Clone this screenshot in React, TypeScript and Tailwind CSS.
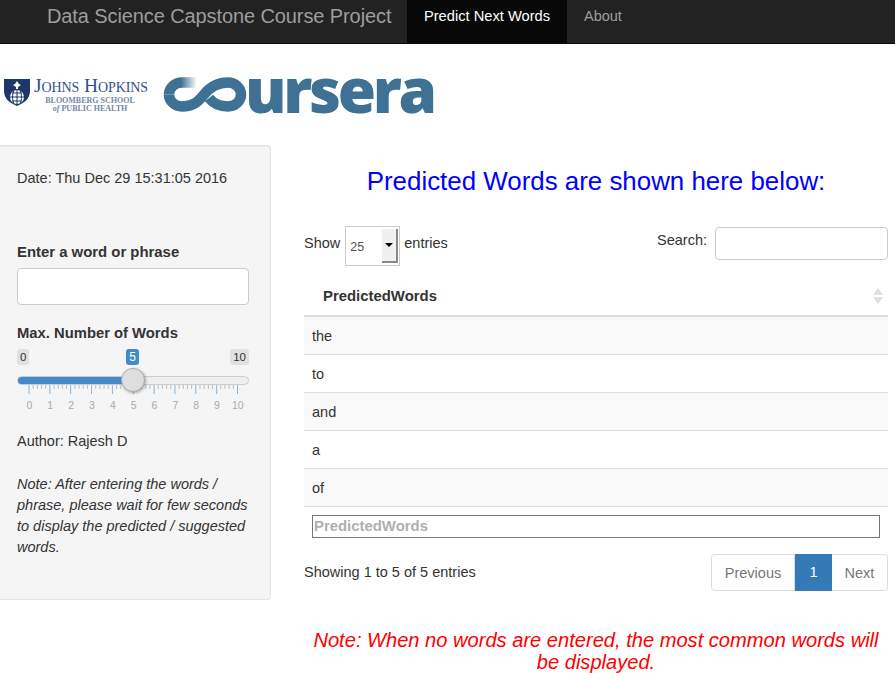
const words = ["the", "to", "and", "a", "of"];
const scale = [0, 1, 2, 3, 4, 5, 6, 7, 8, 9, 10];

const Navbar = () => (
  <nav className="flex h-[44px] bg-[#222222] border-b border-[#080808]">
    <div className="pl-[47px] w-[407px] pt-[3px] text-[20px] leading-[26px] tracking-[-0.1px] text-[#9d9d9d]">
      Data Science Capstone Course Project
    </div>
    <div className="w-[160px] h-[43px] bg-[#080808] text-white text-[14.700px] leading-[20px] pt-[6px] text-center">
      Predict Next Words
    </div>
    <div className="px-[17px] text-[#9d9d9d] text-[14.500px] leading-[20px] pt-[6px]">About</div>
  </nav>
);

const Logos = () => (
  <div className="h-[101px] flex items-start pt-[33px] pl-[4px]">
    <svg width="26" height="28" viewBox="0 0 26 28" className="mt-[1px] shrink-0">
      <path d="M0 1h26v12c0 8-6 12-13 15C6 25 0 21 0 13z" fill="#1d3769" />
      <path d="M13 3l2 3 2 1-3 2v2h-2V9L9 7l2-1z" fill="#fff" />
      <circle cx="13" cy="19" r="7" fill="#fff" />
      <path d="M6 19h14M13 12v14M8 15h10M8 23h10M10 12.500c-2 4-2 9 0 13M16 12.500c2 4 2 9 0 13" stroke="#1d3769" strokeWidth="1" fill="none" />
    </svg>
    <div className="w-[112px] ml-[4px] text-center font-['Liberation_Serif',serif] text-[#34508c]">
      <div className="text-[19.500px] leading-[18px] tracking-[-0.1px] whitespace-nowrap [font-variant-caps:small-caps]">Johns Hopkins</div>
      <div className="text-[8px] leading-[8px] mt-[2px] font-bold text-[#7486ab] whitespace-nowrap">BLOOMBERG SCHOOL</div>
      <div className="text-[8px] leading-[8px] font-bold text-[#7486ab] whitespace-nowrap">
        <i>of</i> PUBLIC HEALTH
      </div>
    </div>
    <svg width="86" height="35" viewBox="0 0 86 35" className="ml-[17px] shrink-0">
      <defs>
        <linearGradient id="cFade" gradientUnits="userSpaceOnUse" x1="18" y1="0" x2="34" y2="0">
          <stop offset="0" stopColor="#3f7194" />
          <stop offset="1" stopColor="#ffffff" />
        </linearGradient>
      </defs>
      <path d="M34 5.500H19A13 12 0 0 0 6 17.500" stroke="url(#cFade)" strokeWidth="10.500" fill="none" />
      <path d="M6 17.500A13 12 0 0 0 19 29.500C30 29.500 35 25 41 17.500S54 5.500 65 5.500A13 12 0 0 1 65 29.500C57 29.500 50 26 46 21" stroke="#3f7194" strokeWidth="10.500" fill="none" />
    </svg>
    <div className="h-[35px] font-['Open_Sans',sans-serif] font-extrabold text-[62px] leading-[24px] tracking-[-3.300px] text-[#3f7194] ml-[-4px] whitespace-nowrap">
      ursera
    </div>
  </div>
);

const SliderInput = () => (
  <div className="relative h-[67px] mt-[6px]">
    <div className="flex justify-between text-[11.500px] leading-[16px] text-[#333333]">
      <span className="bg-[#e1e1e1] rounded-[3px] px-[3px]">0</span>
      <span className="bg-[#e1e1e1] rounded-[3px] px-[3px]">10</span>
    </div>
    <span className="absolute left-[109px] top-0 w-[13px] text-center bg-[#428bca] rounded-[3px] text-white text-[12px] leading-[16px]">5</span>
    <div className="flex mt-[11px] h-[9px] rounded-full border border-[#cccccc] bg-[#eeeeee] overflow-hidden">
      <div className="w-[116px] bg-[#428bca]" />
    </div>
    <div className="absolute left-[104px] top-[19px] w-[24px] h-[24px] rounded-full bg-[#dedede] border border-[#ababab] shadow-[1px_1px_3px_rgba(0,0,0,0.3)]" />
    <svg width="232" height="10" viewBox="0 0 232 10" className="block">
      {scale.map((n) => (
        <line key={n} x1={12 + n * 20.85} x2={12 + n * 20.85} y1="0" y2="9" stroke="#428bca" strokeOpacity="0.6" />
      ))}
      {scale.slice(0, 10).flatMap((n) =>
        [1, 2, 3, 4].map((m) => (
          <line key={`${n}-${m}`} x1={12 + n * 20.85 + m * 4.17} x2={12 + n * 20.85 + m * 4.17} y1="0" y2="4" stroke="#bbbbbb" />
        ))
      )}
    </svg>
    <div className="flex text-[10.500px] leading-[12px] text-[#aaaaaa] ml-[2px] mt-[4px]">
      {scale.map((n) => (
        <span key={n} className="w-[20.850px] text-center">{n}</span>
      ))}
    </div>
  </div>
);

const Sidebar = () => (
  <aside className="w-[271px] h-[455px] shrink-0 bg-[#f5f5f5] border border-l-0 border-[#e3e3e3] rounded-r-[4px] pl-[17px] pr-[21px] pt-[22px] text-[14.500px] leading-[20px] text-[#333333] shadow-[inset_0_1px_1px_rgba(0,0,0,0.05)]">
    <p>Date: Thu Dec 29 15:31:05 2016</p>
    <label className="block font-bold text-[14.900px] mt-[54px]">Enter a word or phrase</label>
    <input className="block w-[232px] h-[37px] mt-[6px] bg-white border border-[#cccccc] rounded-[4px]" />
    <label className="block font-bold text-[14.800px] mt-[18px]">Max. Number of Words</label>
    <SliderInput />
    <p className="mt-[15px]">Author: Rajesh D</p>
    <p className="italic mt-[23px] leading-[21px]">
      Note: After entering the words / phrase, please wait for few seconds to display the predicted / suggested words.
    </p>
  </aside>
);

const Controls = () => (
  <div className="flex justify-between h-[51px]">
    <div className="flex items-start">
      <span className="mt-[7px]">Show</span>
      <div className="w-[55px] h-[40px] ml-[5px] bg-white border border-[#cccccc] flex pt-[2px] pl-[4px] pr-[1px]">
        <span className="w-[32px] text-[12.500px] leading-[16px] pt-[10px] text-[#555555]">25</span>
        <div className="w-[16px] h-[34px] bg-[#f0f0f0] border-r-2 border-b-2 border-[#8a8a8a] flex items-center justify-center">
          <span className="w-0 h-0 border-x-[4px] border-x-transparent border-t-[4px] border-t-black" />
        </div>
      </div>
      <span className="mt-[7px] ml-[4px]">entries</span>
    </div>
    <div className="flex items-start">
      <span className="mt-[4px] mr-[8px]">Search:</span>
      <input className="w-[173px] h-[33px] mt-[1px] bg-white border border-[#cccccc] rounded-[4px]" />
    </div>
  </div>
);

const WordsTable = () => (
  <div>
    <div className="h-[40px] flex items-center justify-between border-b-2 border-[#dddddd] pl-[19px] pr-[5px] font-bold text-[14.900px]">
      <span>PredictedWords</span>
      <svg width="10" height="16" viewBox="0 0 10 16">
        <path d="M5 0l5 7H0z M5 16l5-7H0z" fill="#e0e0e0" />
      </svg>
    </div>
    {words.map((w, i) => (
      <div key={w} className={`h-[38px] flex items-center pl-[8px] border-b border-[#dddddd] ${i % 2 === 0 ? "bg-[#f9f9f9]" : "bg-white"}`}>
        {w}
      </div>
    ))}
    <div className="mx-[8px] mt-[8px] h-[23px] border border-[#777777] pl-[1px] font-bold text-[14.900px] leading-[20px] text-[#b0b0b0]">
      PredictedWords
    </div>
  </div>
);

const Pager = () => (
  <div className="flex justify-between mt-[16px]">
    <span className="mt-[8px]">Showing 1 to 5 of 5 entries</span>
    <div className="flex h-[37px] leading-[37px] text-[#777777]">
      <span className="w-[84px] text-center border border-[#dddddd] rounded-l-[4px]">Previous</span>
      <span className="w-[37px] text-center bg-[#337ab7] text-white">1</span>
      <span className="w-[56px] text-center border border-l-0 border-[#dddddd] rounded-r-[4px]">Next</span>
    </div>
  </div>
);

export default function App() {
  return (
    <div className="w-[895px] h-[673px] overflow-hidden bg-white font-['Liberation_Sans',Arial,sans-serif] text-[14.500px] leading-[20px] text-[#333333]">
      <Navbar />
      <Logos />
      <div className="flex">
        <Sidebar />
        <main className="w-[584px] ml-[33px] shrink-0">
          <h2 className="text-[#0000ff] text-[25.900px] leading-[30px] text-center mt-[21px] mb-[30px]">
            Predicted Words are shown here below:
          </h2>
          <Controls />
          <WordsTable />
          <Pager />
          <p className="text-[#ff0000] italic text-[20.100px] leading-[22px] text-center mt-[38px] px-[8px]">
            Note: When no words are entered, the most common words will be displayed.
          </p>
        </main>
      </div>
    </div>
  );
}
